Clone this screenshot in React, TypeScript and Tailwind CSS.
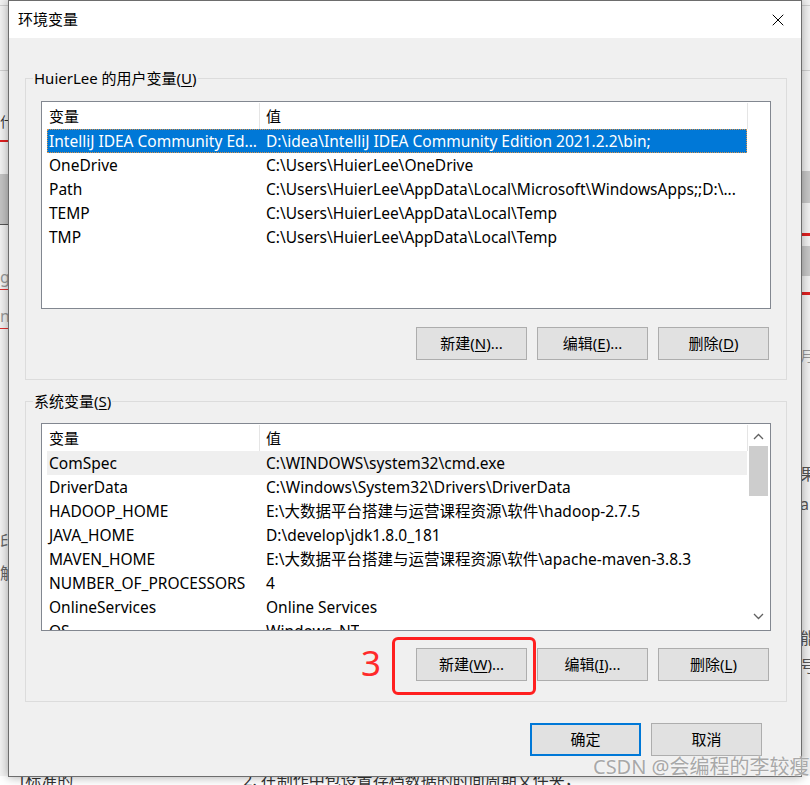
import { X } from "lucide-react";

type Row = { name: string; value: string; state?: "selected" | "hover" };

const userRows: Row[] = [
  { name: "IntelliJ IDEA Community Ed...", value: "D:\\idea\\IntelliJ IDEA Community Edition 2021.2.2\\bin;", state: "selected" },
  { name: "OneDrive", value: "C:\\Users\\HuierLee\\OneDrive" },
  { name: "Path", value: "C:\\Users\\HuierLee\\AppData\\Local\\Microsoft\\WindowsApps;;D:\\..." },
  { name: "TEMP", value: "C:\\Users\\HuierLee\\AppData\\Local\\Temp" },
  { name: "TMP", value: "C:\\Users\\HuierLee\\AppData\\Local\\Temp" },
];

const sysRows: Row[] = [
  { name: "ComSpec", value: "C:\\WINDOWS\\system32\\cmd.exe", state: "hover" },
  { name: "DriverData", value: "C:\\Windows\\System32\\Drivers\\DriverData" },
  { name: "HADOOP_HOME", value: "E:\\大数据平台搭建与运营课程资源\\软件\\hadoop-2.7.5" },
  { name: "JAVA_HOME", value: "D:\\develop\\jdk1.8.0_181" },
  { name: "MAVEN_HOME", value: "E:\\大数据平台搭建与运营课程资源\\软件\\apache-maven-3.8.3" },
  { name: "NUMBER_OF_PROCESSORS", value: "4" },
  { name: "OnlineServices", value: "Online Services" },
  { name: "OS", value: "Windows_NT" },
];

function Btn({ label, keyChar, tail = "", primary = false }: { label: string; keyChar?: string; tail?: string; primary?: boolean }) {
  return (
    <button
      className={
        primary
          ? "flex h-[33px] w-[111px] items-center justify-center border-2 border-[#0078d7] bg-[#e1e1e1] text-[15px] text-black"
          : "flex h-[33px] w-[111px] items-center justify-center border border-[#adadad] bg-[#e1e1e1] text-[15px] text-black"
      }
    >
      {label}
      {keyChar && (
        <>
          (<span className="underline underline-offset-2">{keyChar}</span>){tail}
        </>
      )}
    </button>
  );
}

function VarList({ rows, scroll }: { rows: Row[]; scroll?: boolean }) {
  return (
    <div className="relative h-[208px] w-[730px] overflow-hidden border border-[#828790] bg-white">
      <div className="ml-[5px] w-[701px]">
        <div className="flex h-[27px] items-center pt-[1px]">
          <div className="flex h-full w-[213px] items-center border-r border-[#e5e5e5] pl-[2px]">变量</div>
          <div className="flex h-full flex-1 items-center border-r border-[#e5e5e5] pl-[6px]">值</div>
        </div>
        {rows.map((r) => (
          <div
            key={r.name}
            className={
              r.state === "selected"
                ? "flex h-6 w-[700px] items-center bg-[#0078d7] pt-[2px] text-[15.5px] text-white outline outline-1 -outline-offset-1 outline-dotted outline-[#d9924a]"
                : r.state === "hover"
                ? "flex h-6 w-[700px] items-center bg-[#efefef] pt-[2px] text-[15.5px]"
                : "flex h-6 w-[700px] items-center pt-[2px] text-[15.5px]"
            }
          >
            <div className="w-[213px] shrink-0 overflow-hidden whitespace-nowrap pl-[2px]">{r.name}</div>
            <div className="overflow-hidden whitespace-nowrap pl-[6px]">{r.value}</div>
          </div>
        ))}
      </div>
      {scroll && (
        <div className="absolute top-0 bottom-0 left-[706px] flex w-[20px] flex-col items-center bg-white">
          <svg width="11" height="7" viewBox="0 0 11 7" className="mt-[9px]">
            <path d="M1 6 L5.5 1.5 L10 6" fill="none" stroke="#606060" strokeWidth="1.3" />
          </svg>
          <div className="mt-[6px] h-[50px] w-[19px] bg-[#cdcdcd]" />
          <div className="flex-1" />
          <svg width="11" height="7" viewBox="0 0 11 7" className="mb-[10px]">
            <path d="M1 1 L5.5 5.5 L10 1" fill="none" stroke="#606060" strokeWidth="1.3" />
          </svg>
        </div>
      )}
    </div>
  );
}

function Group({ title, keyChar, children, pt, pb, gap }: { title: string; keyChar: string; children: React.ReactNode; pt: string; pb: string; gap: string }) {
  return (
    <div className={`relative ml-4 w-[762px] border border-[#dcdcdc] pl-[15px] ${pt} ${pb}`}>
      <div className="absolute -top-[12px] left-[7px] bg-[#f0f0f0] px-[1px] text-[15px] leading-[22px]">
        {title}(<span className="underline underline-offset-2">{keyChar}</span>)
      </div>
      {children}
      <div className={`flex w-[730px] justify-end gap-[10px] pr-[2px] ${gap}`}>
        {title.startsWith("系统") ? (
          <>
            <Btn label="新建" keyChar="W" tail="..." />
            <Btn label="编辑" keyChar="I" tail="..." />
            <Btn label="删除" keyChar="L" />
          </>
        ) : (
          <>
            <Btn label="新建" keyChar="N" tail="..." />
            <Btn label="编辑" keyChar="E" tail="..." />
            <Btn label="删除" keyChar="D" />
          </>
        )}
      </div>
    </div>
  );
}

export default function App() {
  return (
    <div className="relative h-[785px] w-[810px] overflow-hidden bg-white text-[15px] text-black [font-family:'Noto_Sans','Noto_Sans_CJK_SC',sans-serif]">
      {/* document behind the dialog */}
      <div className="absolute left-0 top-0 h-[785px] w-[10px] bg-[#f3f3f3]">
        <div className="h-[6px] border-b border-[#d0d0d0]" />
        <div className="mt-[15px] h-[50px] border-b border-[#d0d0d0]" />
        <div className="mt-[40px] text-[14px] text-[#333]">什</div>
        <div className="mt-[8px] h-[2px] bg-[#e02020]" />
        <div className="mt-[32px] h-[50px] bg-[#c4c4c4]" />
        <div className="h-[1px] bg-[#555]" />
        <div className="mt-[40px] text-[16px] text-[#999]">g</div>
        <div className="h-[1px] bg-[#e03030]" />
        <div className="mt-[14px] text-[16px] text-[#999]">n</div>
        <div className="h-[1px] bg-[#e03030]" />
        <div className="mt-[200px] text-[16px] text-[#666]">印</div>
        <div className="mt-[8px] text-[16px] text-[#666]">解</div>
      </div>
      <div className="absolute right-0 top-0 h-[785px] w-[10px] bg-[#f3f3f3]">
        <div className="h-[6px] border-b border-[#d0d0d0]" />
        <div className="mt-[15px] h-[50px] border-b border-[#d0d0d0]" />
        <div className="mt-[100px] h-[32px] bg-[#c8c8c8]" />
        <div className="mt-[30px] h-[3px] bg-[#e02020]" />
        <div className="mt-[10px] h-[30px] bg-[#c8c8c8]" />
        <div className="mt-[16px] h-[3px] bg-[#e02020]" />
        <div className="mt-[50px] text-[14px] text-[#999]">月</div>
        <div className="mt-[96px] text-[16px] text-[#555]">果</div>
        <div className="mt-[6px] text-[16px] text-[#555]">a</div>
        <div className="mt-[110px] text-[16px] text-[#555]">能</div>
        <div className="mt-[4px] text-[16px] text-[#555]">号</div>
      </div>
      <div className="absolute bottom-0 left-0 flex h-[9px] w-[810px] items-start overflow-hidden bg-white text-[16px] leading-[16px] text-[#333]">
        <span className="ml-[20px] -mt-[4px]">[标准的</span>
        <span className="ml-[170px] -mt-[4px]">2. 在制作中包设置存档数据的时间周期文件夹，</span>
      </div>

      {/* dialog window */}
      <div className="absolute left-[8px] top-0 flex h-[777px] w-[794px] flex-col border border-[#6d6d6d] bg-[#f0f0f0] shadow-[0_0_10px_rgba(0,0,0,0.35)]">
        <div className="flex h-[37px] items-center justify-between bg-white pl-[9px] pr-[13px]">
          <span className="text-[15px]">环境变量</span>
          <X size={20} strokeWidth={1.2} className="text-black" />
        </div>

        <div className="mt-[40px]">
          <Group title="HuierLee 的用户变量" keyChar="U" pt="pt-[22px]" pb="pb-[19px]" gap="mt-[18px]">
            <VarList rows={userRows} />
          </Group>
        </div>

        <div className="mt-[21px]">
          <Group title="系统变量" keyChar="S" pt="pt-[21px]" pb="pb-[20px]" gap="mt-[17px]">
            <VarList rows={sysRows} scroll />
          </Group>
        </div>

        <div className="mt-[21px] flex justify-end gap-[10px] pr-[39px]">
          <Btn label="确定" primary />
          <Btn label="取消" />
        </div>
      </div>

      {/* red annotation */}
      <div className="absolute left-[392px] top-[637px] h-[58px] w-[144px] rounded-[6px] border-[3px] border-[#ff1f1f]" />
      <div className="absolute left-[361px] top-[638px] text-[35px] leading-[50px] text-[#ff2a2a]">3</div>

      {/* watermark */}
      <div className="absolute left-[593px] top-[755px] text-[20px] leading-[24px] text-[#a8a8a8] [text-shadow:0_0_2px_#fff]">
        CSDN @会编程的李较瘦
      </div>
    </div>
  );
}
